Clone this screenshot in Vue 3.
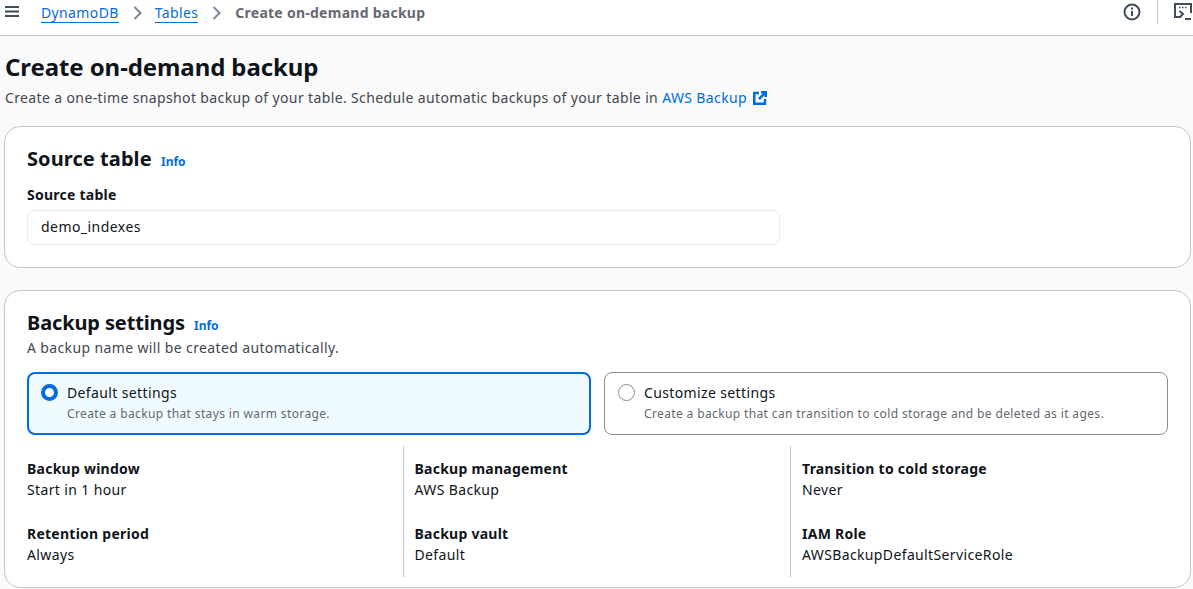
<script setup>
const columns = [
  [
    { label: "Backup window", value: "Start in 1 hour" },
    { label: "Retention period", value: "Always" },
  ],
  [
    { label: "Backup management", value: "AWS Backup" },
    { label: "Backup vault", value: "Default" },
  ],
  [
    { label: "Transition to cold storage", value: "Never" },
    { label: "IAM Role", value: "AWSBackupDefaultServiceRole" },
  ],
];
</script>

<template>
  <div class="page">
    <header class="topbar">
      <button class="menu" aria-label="Menu">
        <svg width="16" height="14" viewBox="0 0 16 14">
          <path d="M1 2h14M1 6.500h14M1 11h14" stroke="#414d5c" stroke-width="2" fill="none" />
        </svg>
      </button>
      <nav class="crumbs">
        <a href="#">DynamoDB</a>
        <svg class="chev" width="10" height="16" viewBox="0 0 10 16">
          <path d="M1.500 2l6 6-6 6" stroke="#7d8998" stroke-width="2" fill="none" />
        </svg>
        <a href="#">Tables</a>
        <svg class="chev" width="10" height="16" viewBox="0 0 10 16">
          <path d="M1.500 2l6 6-6 6" stroke="#7d8998" stroke-width="2" fill="none" />
        </svg>
        <span class="current">Create on-demand backup</span>
      </nav>
      <div class="tools">
        <svg class="info-icon" width="18" height="18" viewBox="0 0 18 18">
          <circle cx="9" cy="9" r="7.500" stroke="#414d5c" stroke-width="2" fill="none" />
          <path d="M9 8v5" stroke="#414d5c" stroke-width="2" fill="none" />
          <path d="M9 4.500v2" stroke="#414d5c" stroke-width="2" fill="none" />
        </svg>
        <span class="tool-sep"></span>
        <svg class="shell-icon" width="20" height="20" viewBox="0 0 20 20">
          <path d="M8 15H2V2h16v9" stroke="#414d5c" stroke-width="2" fill="none" />
          <path d="M6 5.500h1.500M9 5.500h1.500M12 5.500h1.500" stroke="#414d5c" stroke-width="1.500" fill="none" />
          <path d="M6.500 9l3.500 3-3.500 3.500" stroke="#414d5c" stroke-width="2" fill="none" />
          <path d="M12 17h6" stroke="#414d5c" stroke-width="2" fill="none" />
        </svg>
      </div>
    </header>

    <main class="content">
      <h1>Create on-demand backup</h1>
      <p class="lead">
        Create a one-time snapshot backup of your table. Schedule automatic backups of your table in
        <a href="#" class="ext">AWS Backup
          <svg width="14" height="14" viewBox="0 0 14 14">
            <path d="M6 2H1.250v10.750H12V8" stroke="#006ce0" stroke-width="2.500" fill="none" />
            <path d="M8 1.250h4.750V6M12.500 1.500L6 8" stroke="#006ce0" stroke-width="2.500" fill="none" />
          </svg>
        </a>
      </p>

      <section class="card source">
        <h2>Source table <a href="#" class="info">Info</a></h2>
        <label class="field-label">Source table</label>
        <div class="readonly">demo_indexes</div>
      </section>

      <section class="card settings">
        <h2>Backup settings <a href="#" class="info">Info</a></h2>
        <p class="hint">A backup name will be created automatically.</p>

        <div class="tiles">
          <div class="tile selected">
            <span class="radio on"></span>
            <div>
              <div class="tile-title">Default settings</div>
              <div class="tile-desc">Create a backup that stays in warm storage.</div>
            </div>
          </div>
          <div class="tile">
            <span class="radio"></span>
            <div>
              <div class="tile-title">Customize settings</div>
              <div class="tile-desc">Create a backup that can transition to cold storage and be deleted as it ages.</div>
            </div>
          </div>
        </div>

        <div class="details">
          <div v-for="(col, i) in columns" :key="i" class="col">
            <div v-for="item in col" :key="item.label" class="pair">
              <div class="pair-label">{{ item.label }}</div>
              <div class="pair-value">{{ item.value }}</div>
            </div>
          </div>
        </div>
      </section>
    </main>
  </div>
</template>

<style>
html,
body {
  margin: 0;
  background: #fafafa;
}
</style>

<style scoped>
.page {
  height: 589px;
  overflow: hidden;
  font-family: "Noto Sans", "Open Sans", sans-serif;
  font-size: 14px;
  line-height: 20px;
  letter-spacing: 0.37px;
  color: #0f141a;
  background: #fafafa;
}

a {
  color: #006ce0;
  text-decoration: none;
}

.topbar {
  height: 35px;
  display: flex;
  align-items: center;
  background: #fff;
  border-bottom: 1px solid #c6c6cd;
  padding-left: 4px;
}

.menu {
  border: 0;
  padding: 0;
  background: none;
  width: 16px;
  height: 14px;
  margin-top: -11px;
  display: block;
}

.crumbs {
  display: flex;
  align-items: center;
  margin-left: 21px;
  margin-top: -9px;
}

.crumbs a {
  border-bottom: 1px solid #006ce0;
  line-height: 19px;
}

.chev {
  margin: 0 12px 0 14px;
}

.current {
  color: #656871;
  font-weight: 700;
  letter-spacing: 0.26px;
  margin-left: 1px;
}

.tools {
  margin-left: auto;
  display: flex;
  align-items: center;
  margin-top: -11px;
}

.tool-sep {
  width: 1px;
  height: 24px;
  background: #c6c6cd;
  margin: 0 15px 0 16px;
}

.content {
  padding: 0 2px 0 4px;
}

h1 {
  margin: 0;
  padding-top: 14px;
  padding-left: 1px;
  font-size: 24px;
  line-height: 34px;
  font-weight: 700;
  letter-spacing: -0.09px;
}

.lead {
  margin: 4px 0 0;
  padding-left: 1px;
  color: #424650;
  height: 20px;
}

.ext svg {
  vertical-align: -2px;
  margin-left: 2px;
}

.card {
  background: #fff;
  border: 1px solid #c6c6cd;
  border-radius: 16px;
  padding: 0 22px;
  box-sizing: border-box;
}

.source {
  margin-top: 18px;
  height: 142px;
  padding-top: 19px;
}

.settings {
  margin-top: 22px;
  height: 298px;
  padding-top: 19px;
}

h2 {
  margin: 0;
  font-size: 20px;
  line-height: 26px;
  font-weight: 700;
}

.source h2 {
  letter-spacing: 0.08px;
}

.settings h2 {
  letter-spacing: -0.13px;
}

.info {
  font-size: 12px;
  font-weight: 700;
  letter-spacing: 0;
  margin-left: 4px;
}

.field-label {
  display: block;
  margin-top: 10px;
  font-weight: 700;
  letter-spacing: 0.25px;
}

.readonly {
  margin-top: 5px;
  height: 35px;
  width: 753px;
  box-sizing: border-box;
  border: 1px solid #ebebf0;
  border-radius: 8px;
  padding: 6px 13px;
  letter-spacing: 0.45px;
}

.hint {
  margin: -1px 0 0;
  color: #424650;
}

.tiles {
  display: flex;
  gap: 13px;
  margin-top: 14px;
}

.tile {
  flex: 1;
  height: 63px;
  box-sizing: border-box;
  display: flex;
  gap: 9px;
  padding: 10px 13px;
  border: 1px solid #8c8c94;
  border-radius: 8px;
}

.tile.selected {
  background: #f0fbff;
  border: 2px solid #006ce0;
  padding: 9px 12px;
}

.radio {
  width: 17px;
  height: 17px;
  margin-top: 1px;
  box-sizing: border-box;
  border-radius: 50%;
  border: 1px solid #8c8c94;
  flex: none;
  background: #fff;
}

.radio.on {
  border: 4.500px solid #006ce0;
}

.tile-desc {
  font-size: 12px;
  line-height: 20px;
  color: #656871;
  margin-top: 1px;
}

.details {
  display: grid;
  grid-template-columns: repeat(3, 387.500px);
  margin-top: 11px;
  height: 131px;
}

.col {
  display: flex;
  flex-direction: column;
  gap: 24px;
  padding-top: 13px;
  padding-left: 11px;
  border-left: 1px solid #c6c6cd;
  margin-left: -12px;
}

.col:first-child {
  border-left: 0;
  padding-left: 0;
  margin-left: 0;
}

.pair-label {
  font-weight: 700;
  letter-spacing: 0.25px;
}

.pair-value {
  margin-top: 1px;
}
</style>
